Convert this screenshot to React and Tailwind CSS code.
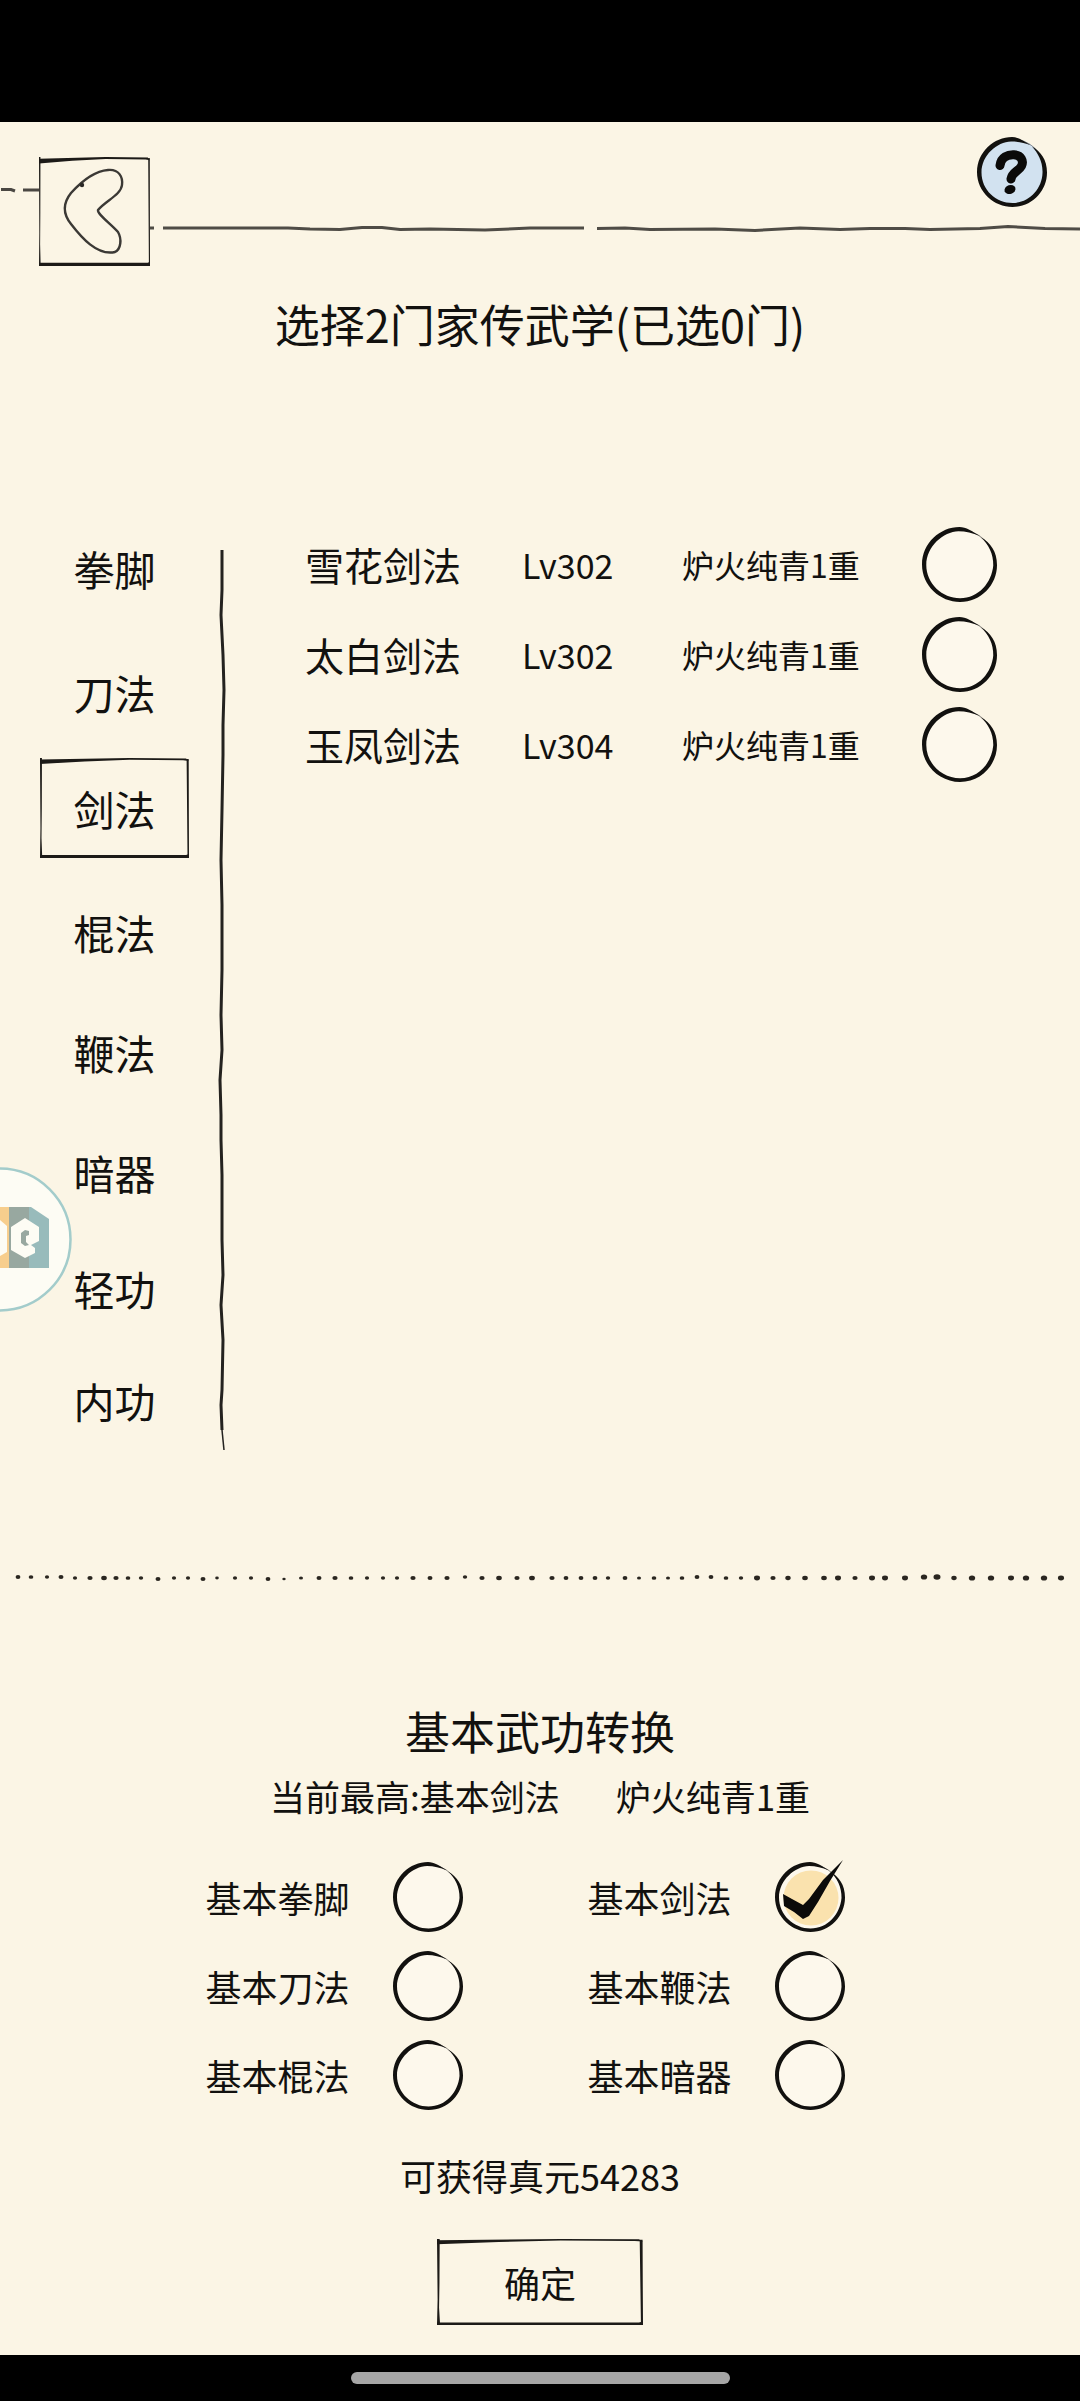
import React, { useState } from "react";

const categories = [
  { name: "拳脚", gap: "" },
  { name: "刀法", gap: "mt-6" },
  { name: "剑法", gap: "mt-4" },
  { name: "棍法", gap: "mt-6" },
  { name: "鞭法", gap: "mt-5" },
  { name: "暗器", gap: "mt-5" },
  { name: "轻功", gap: "mt-4" },
  { name: "内功", gap: "mt-3" },
];

const skills = [
  { name: "雪花剑法", level: "Lv302", rank: "炉火纯青1重" },
  { name: "太白剑法", level: "Lv302", rank: "炉火纯青1重" },
  { name: "玉凤剑法", level: "Lv304", rank: "炉火纯青1重" },
];

const basics = [
  "基本拳脚",
  "基本剑法",
  "基本刀法",
  "基本鞭法",
  "基本棍法",
  "基本暗器",
];

// [x, y, radius] of every ink dot in the divider
const dots = [
  [18, 7, 2.4], [31, 7, 2.3], [47, 7, 2.1], [61, 7, 2.5], [75, 8, 2.1],
  [90, 8, 2.6], [104, 8, 2.8], [116, 8, 2.6], [128, 8, 2.3], [141, 8, 2.2],
  [158, 9, 2.5], [174, 8, 2.1], [188, 8, 2.1], [203, 9, 2.5], [217, 8, 1.8],
  [235, 8, 2.1], [251, 8, 2.1], [268, 9, 2.4], [284, 9, 1.7], [301, 8, 2],
  [319, 8, 2.5], [335, 8, 2.6], [351, 8, 2.3], [367, 8, 2.1], [383, 8, 2.1],
  [397, 8, 2.1], [413, 8, 2.6], [430, 8, 2.5], [447, 8, 2.6], [465, 7, 2.2],
  [482, 8, 2.6], [499, 8, 2.8], [517, 8, 2.6], [532, 8, 2.9], [552, 8, 2.6],
  [566, 8, 2.4], [581, 8, 2.4], [595, 8, 2.4], [608, 8, 2.2], [625, 8, 2.4],
  [639, 8, 2], [654, 8, 2.3], [668, 8, 2], [682, 8, 2.3], [697, 7, 2.4],
  [711, 7, 2.4], [726, 8, 2.3], [741, 8, 2.2], [757, 8, 3], [773, 8, 2.6],
  [788, 8, 2.7], [805, 8, 2.8], [824, 8, 2.8], [838, 8, 3], [855, 8, 2.6],
  [872, 8, 3], [885, 8, 3], [905, 8, 3], [924, 7, 3.2], [937, 7, 3.5],
  [954, 8, 2.7], [972, 8, 3.2], [991, 8, 3.2], [1011, 8, 3], [1026, 8, 3.2],
  [1044, 8, 3.2], [1061, 8, 3.1],
];

// hand-drawn rectangle that stretches to its parent
const Frame = () => (
  <svg
    className="pointer-events-none absolute inset-0 h-full w-full"
    viewBox="0 0 100 100"
    preserveAspectRatio="none"
    fill="#1c1a17"
    aria-hidden="true"
  >
    <path d="M0 1.5 L60 0 L98 0.4 L100 3 L96 2.2 L60 1.8 L30 3.4 L0 6 Z" />
    <path d="M0 0 L1.3 0 L1.2 50 L1 80 L1.5 100 L0 100 L0.3 70 Z" />
    <path d="M98.4 1 L99.8 1 L99.9 60 L100 98 L99 98 L98.7 50 Z" />
    <path d="M0 97 L98 97 L100 96 L100 100 L0 100 Z" />
  </svg>
);

const Ring = ({ checked }) => (
  <svg
    className="pointer-events-none col-start-1 row-start-1 h-full w-full overflow-visible"
    viewBox="0 0 70 70"
    aria-hidden="true"
  >
    <circle cx="35" cy="35.5" r="33" fill="#fdf8ec" stroke="#8d8a82" strokeWidth="1" />
    {checked && <circle cx="36" cy="36" r="27.5" fill="#fae2ae" />}
    <path
      fill="#12110f"
      d="M54 8.5 C47 4 41 0 35 0 C17 0 0 15 0 35 C0 55 17 70 35.5 70 C55 70 70 54 70 35.5 C70 23 64 14.500 55 9.500 C62 16 66.800 25 66.500 36 C65 52 53 66.500 35.5 66.500 C19 66.500 4 53 4 35.5 C4 18 20 4.500 34 4 C41 4 47 5.500 54 8.5 Z"
    />
    {checked && (
      <path
        fill="#0b0a09"
        d="M8 32 L17 37 L28 43 L34 37 L48 18 L68 -2 L55 19 L43 40 L34 54 L28 57 L19 50 L9 44 Z"
      />
    )}
  </svg>
);

const HelpIcon = () => (
  <svg viewBox="0 0 70 70" className="h-[70px] w-[70px]" aria-hidden="true">
    <circle cx="35" cy="35" r="33" fill="#d2e2f0" stroke="#8b9299" strokeWidth="1" />
    <path
      fill="#12110f"
      d="M54 8.5 C47 4 41 0 35 0 C17 0 0 15 0 35 C0 55 17 70 35.5 70 C55 70 70 54 70 35.5 C70 23 64 14.500 55 9.500 C61 16 66 25 65.500 36 C65 52 52 66 35.5 66 C19 66 4.500 53 4.500 35.5 C4.500 18 20 5 34 4.500 C41 4.500 47 5.500 54 8.5 Z"
    />
    <path
      fill="none"
      stroke="#0b0a09"
      strokeWidth="9"
      strokeLinecap="round"
      strokeLinejoin="round"
      d="M23 28.5 C24 20 31 17.5 37 17.8 C44 18 47 24 44.5 29 C42 34 35 35 34 42"
    />
    <ellipse cx="33" cy="52.5" rx="5.6" ry="4.4" fill="#0b0a09" transform="rotate(-18 33 52.5)" />
  </svg>
);

const BackIcon = () => (
  <svg viewBox="0 0 111 109" className="h-full w-full" aria-hidden="true">
    <path
      fill="none"
      stroke="#3b3935"
      strokeWidth="2.4"
      strokeLinejoin="round"
      d="M69 13 C80 12 84 20 83 28 C82 38 66 44 59 53 C58 57 72 67 79 75 C83 82 82 92 76 95 C58 99 42 80 32 67 C24 57 24 46 32 36 C42 25 55 14 69 13 Z"
    />
    <circle cx="43" cy="28" r="2.2" fill="#2b2926" />
  </svg>
);

const Header = () => (
  <header className="flex pt-[15px]">
    <svg viewBox="0 0 39 109" className="mt-5 h-[109px] w-[39px]" fill="none" stroke="#4a4742" strokeWidth="3" aria-hidden="true">
      <path d="M1 32.5 L11 32.5 L15 34 M23 33 L39 33" />
    </svg>
    <button aria-label="返回" className="relative mt-5 h-[109px] w-[111px] shrink-0">
      <Frame />
      <BackIcon />
    </button>
    <div className="flex flex-1 flex-col">
      <button aria-label="帮助" className="mr-[33px] self-end">
        <HelpIcon />
      </button>
      <svg
        viewBox="0 0 930 16"
        preserveAspectRatio="none"
        className="mt-[13px] h-4 w-full"
        fill="none"
        stroke="#4f4c46"
        strokeWidth="3"
        aria-hidden="true"
      >
        <path d="M0 8 L4 8 M13 8 L138 8 L160 9 L190 9.5 L212 7.5 L232 7.5 L250 9.5 L280 9 L335 10 L380 8 L434 8" />
        <path d="M447 8.5 L475 8 L500 9.5 L565 9 L605 10.5 L650 8 L690 9.5 L720 8.5 L755 8.5 L780 9.5 L830 8.5 L858 6.5 L895 8.5 L930 9" />
      </svg>
    </div>
  </header>
);

const FloatingBall = () => (
  <button aria-label="悬浮窗" className="absolute top-[1045px] left-[-73px] h-[145px] w-[145px]">
    <svg viewBox="0 0 145 145" className="h-full w-full" aria-hidden="true">
      <circle cx="72.5" cy="72.5" r="71" fill="#fdfcf4" stroke="#a3cccb" strokeWidth="2.5" />
      <path fill="#f7ce8d" d="M40 40 H82 V101 H40 Z" />
      <path fill="#98a8a0" d="M82 40 H102 V101 H82 Z" />
      <path fill="#98bbbb" d="M102 40 H104 L122 52 V101 H102 Z" />
      <path fill="#fdfcf4" d="M60 50 L73 53 L80 59 V85 L73 89 L60 90 Z" />
      <path fill="#fdfcf4" d="M98 51 L112 60 V74 L104 78 L108 81 V86 L98 91 L84 83 V60 Z" />
      <path fill="#98a8a0" d="M94 66 L98 63 L102 64 V68 L99 69 V75 L102 78 L98 79 L94 76 Z" />
    </svg>
  </button>
);

const App = () => {
  const [category, setCategory] = useState("剑法");
  const [chosen, setChosen] = useState([]);
  const [basic, setBasic] = useState("基本剑法");

  const toggle = (name) => {
    if (chosen.includes(name)) {
      setChosen(chosen.filter((n) => n !== name));
    } else if (chosen.length < 2) {
      setChosen([...chosen, name]);
    }
  };

  return (
    <div className="flex min-h-screen flex-col bg-black font-['Noto_Sans_CJK_SC',sans-serif] text-[#12110f]">
      <div className="h-[122px]" />
      <main className="relative flex flex-1 flex-col overflow-hidden bg-[#fbf5e5]">
        <Header />

        <h1 className="mt-7 text-center text-[45px] leading-[60px]">
          选择2门家传武学(已选{chosen.length}门)
        </h1>

        <section className="mt-[164px] flex">
          <nav className="flex w-[218px] shrink-0 flex-col pl-10">
            {categories.map((c) => (
              <button
                key={c.name}
                onClick={() => setCategory(c.name)}
                className={`relative h-[100px] w-[149px] text-[41px] leading-[60px] ${c.gap}`}
              >
                {category === c.name && <Frame />}
                {c.name}
              </button>
            ))}
          </nav>
          <div className="mt-8 w-2 shrink-0">
            <svg
              viewBox="0 0 8 900"
              preserveAspectRatio="none"
              className="h-full w-full"
              fill="none"
              stroke="#24221f"
              strokeWidth="3"
              strokeLinejoin="round"
              aria-hidden="true"
            >
              <path d="M4 0 L4 40 L3 65 L5 105 L6 140 L5 175 L5 205 L4 260 L3 310 L4 355 L4 420 L3 465 L4 500 L2 530 L3 565 L3 590 L4 625 L4 690 L5 725 L3 755 L5 790 L4 840 L3 855 L4 880" />
              <path strokeWidth="1.5" d="M4 880 L6 900" />
            </svg>
          </div>
          <ul className="flex-1 pt-px pl-[79px] pr-[83px]">
            {skills.map((s) => (
              <li key={s.name}>
                <label className="grid h-[90px] grid-cols-[217px_160px_1fr_75px] items-center">
                  <span className="text-[39px]">{s.name}</span>
                  <span className="text-[34px]">{s.level}</span>
                  <span className="text-[32px]">{s.rank}</span>
                  <span className="grid h-[75px]">
                    <input
                      type="checkbox"
                      checked={chosen.includes(s.name)}
                      onChange={() => toggle(s.name)}
                      className="col-start-1 row-start-1 appearance-none"
                    />
                    <Ring checked={chosen.includes(s.name)} />
                  </span>
                </label>
              </li>
            ))}
          </ul>
        </section>

        <svg
          viewBox="0 0 1080 16"
          preserveAspectRatio="none"
          className="mt-[120px] h-4 w-full"
          fill="#2a2620"
          aria-hidden="true"
        >
          {dots.map(([x, y, r]) => (
            <ellipse key={x} cx={x} cy={y} rx={r} ry={r * 0.8} />
          ))}
        </svg>

        <section className="mt-[115px] flex flex-col">
          <h2 className="text-center text-[45px] leading-[60px]">基本武功转换</h2>
          <p className="mt-[11px] flex justify-center gap-14 text-[35px] leading-[48px]">
            <span>当前最高:基本剑法</span>
            <span>炉火纯青1重</span>
          </p>
          <div className="mt-8 grid grid-cols-[257px_257px] justify-center gap-x-[125px] pr-[30px]">
            {basics.map((name) => (
              <label key={name} className="flex h-[89px] items-center justify-between text-[36px]">
                <span>{name}</span>
                <span className="grid h-[70px] w-[70px]">
                  <input
                    type="radio"
                    name="basic"
                    checked={basic === name}
                    onChange={() => setBasic(name)}
                    className="col-start-1 row-start-1 appearance-none"
                  />
                  <Ring checked={basic === name} />
                </span>
              </label>
            ))}
          </div>
          <p className="mt-8 text-center text-[36px] leading-[48px]">可获得真元54283</p>
          <button className="relative mx-auto mt-10 mb-7 h-[86px] w-[206px] text-[36px]">
            <Frame />
            确定
          </button>
        </section>

        <FloatingBall />
      </main>
      <div className="flex h-[46px] items-center justify-center">
        <div className="h-3 w-[379px] rounded-full bg-[#a6a6a6]" />
      </div>
    </div>
  );
};

export default App;
